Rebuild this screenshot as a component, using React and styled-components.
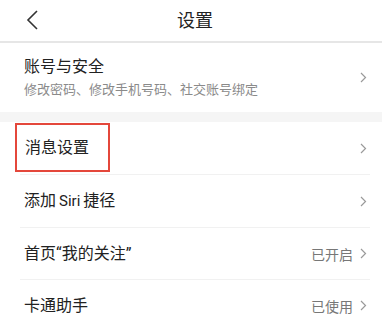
import React from 'react';
import styled, { createGlobalStyle } from 'styled-components';

const GlobalStyle = createGlobalStyle`
  body {
    margin: 0;
    padding: 0;
    background: #ffffff;
    font-family: Roboto, "Noto Sans CJK SC", sans-serif;
    color: #222;
  }
  * { box-sizing: border-box; }
`;

const Page = styled.div`
  width: 382px;
  height: 330px;
  overflow: hidden;
  background: #fff;
`;

const Header = styled.header`
  position: relative;
  height: 43px;
  display: flex;
  align-items: center;
  justify-content: center;
  padding-left: 8px;
  border-bottom: 2px solid #e6e6e6;
`;

const BackButton = styled.button`
  position: absolute;
  left: 25px;
  top: 9px;
  width: 14px;
  height: 22px;
  padding: 0;
  border: none;
  background: none;
  display: flex;
  align-items: center;
  justify-content: center;
`;

const Title = styled.h1`
  margin: 0;
  margin-top: -3px;
  font-size: 18px;
  font-weight: 400;
  color: #222;
`;

const AccountRow = styled.div`
  height: 69px;
  display: flex;
  align-items: center;
  justify-content: space-between;
  padding: 0 15px 0 24px;
`;

const AccountText = styled.div`
  display: flex;
  flex-direction: column;
  gap: 7px;
  margin-top: -1px;
`;

const MainLabel = styled.span`
  font-size: 16px;
  line-height: 18px;
  color: #222;
`;

const Latin = styled.span`
  font-size: 15px;
  margin: 0 3px;
`;

const SubLabel = styled.span`
  font-size: 13px;
  line-height: 14px;
  color: #8a8a8a;
`;

const Band = styled.div`
  height: 10px;
  background: #f5f5f5;
`;

const List = styled.div`
  display: flex;
  flex-direction: column;
`;

const Row = styled.div`
  height: ${p => p.$h}px;
  display: flex;
  align-items: center;
  justify-content: space-between;
  margin: 0 12px 0 20px;
  padding: 0 3px 0 4px;
  border-bottom: 1px solid #f1f1f1;
`;

const Highlight = styled.span`
  display: inline-flex;
  align-items: center;
  height: 49px;
  width: 95px;
  margin-left: -9px;
  padding: 0 0 0 8px;
  border: 2px solid #e4473b;
  margin-bottom: 1px;
`;

const Right = styled.div`
  display: flex;
  align-items: center;
  gap: 7px;
`;

const Value = styled.span`
  font-size: 14px;
  color: #777;
`;

const Chevron = () => (
  <svg width="7" height="11" viewBox="0 0 7 11">
    <path d="M1 1 L5.5 5.5 L1 10" fill="none" stroke="#9a9a9a" strokeWidth="1.2" />
  </svg>
);

const BackIcon = () => (
  <svg width="12" height="20" viewBox="0 0 12 20">
    <path d="M11 1 L2 10 L11 19" fill="none" stroke="#333" strokeWidth="1.6" />
  </svg>
);

const rows = [
  { key: 'msg', label: '消息设置', highlight: true, h: 53 },
  { key: 'siri', label: <>添加<Latin>Siri</Latin>捷径</>, h: 53 },
  { key: 'follow', label: '首页“我的关注”', value: '已开启', h: 52 },
  { key: 'cartoon', label: '卡通助手', value: '已使用', h: 52 },
];

export default function App() {
  return (
    <Page>
      <GlobalStyle />
      <Header>
        <BackButton>
          <BackIcon />
        </BackButton>
        <Title>设置</Title>
      </Header>
      <AccountRow>
        <AccountText>
          <MainLabel>账号与安全</MainLabel>
          <SubLabel>修改密码、修改手机号码、社交账号绑定</SubLabel>
        </AccountText>
        <Chevron />
      </AccountRow>
      <Band />
      <List>
        {rows.map(row => (
          <Row key={row.key} $h={row.h}>
            {row.highlight ? (
              <Highlight>
                <MainLabel>{row.label}</MainLabel>
              </Highlight>
            ) : (
              <MainLabel>{row.label}</MainLabel>
            )}
            <Right>
              {row.value && <Value>{row.value}</Value>}
              <Chevron />
            </Right>
          </Row>
        ))}
      </List>
    </Page>
  );
}
